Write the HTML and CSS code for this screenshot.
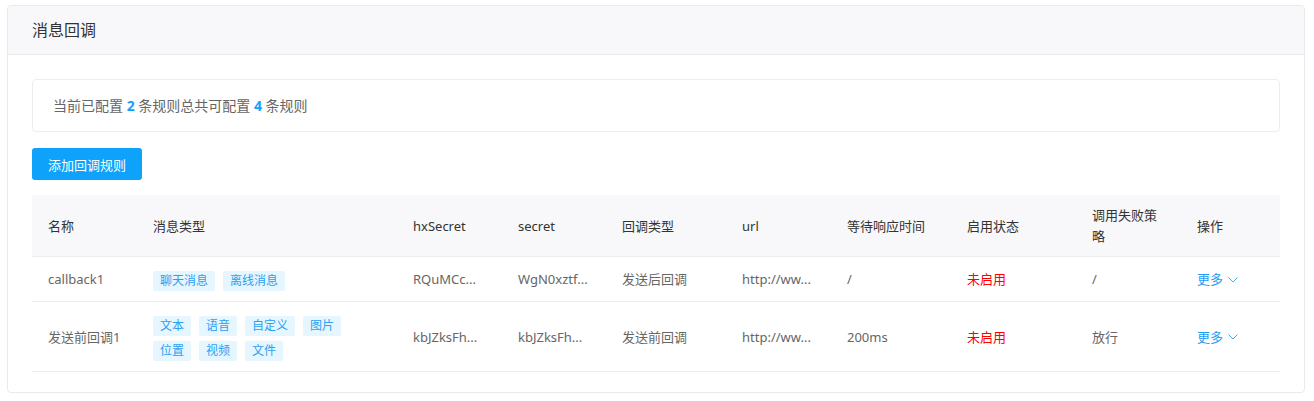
FILE: index.html
```html
<!DOCTYPE html>
<html lang="zh">
<head>
<meta charset="utf-8">
<link rel="stylesheet" href="styles.css">
</head>
<body>
<div class="page">
  <div class="card">
    <div class="card-header">消息回调</div>
    <div class="card-body">
      <div class="info">当前已配置 <b class="num">2</b> 条规则总共可配置 <b class="num">4</b> 条规则</div>
      <button class="btn-primary">添加回调规则</button>
      <table class="tbl">
        <colgroup>
          <col class="c1"><col class="c2"><col class="c3"><col class="c4"><col class="c5">
          <col class="c6"><col class="c7"><col class="c8"><col class="c9"><col class="c10">
        </colgroup>
        <thead>
          <tr>
            <th>名称</th><th>消息类型</th><th>hxSecret</th><th>secret</th><th>回调类型</th>
            <th>url</th><th>等待响应时间</th><th>启用状态</th><th>调用失败策略</th><th>操作</th>
          </tr>
        </thead>
        <tbody>
          <tr>
            <td>callback1</td>
            <td><div class="tags"><span class="tag">聊天消息</span><span class="tag">离线消息</span></div></td>
            <td>RQuMCc...</td>
            <td>WgN0xztf...</td>
            <td>发送后回调</td>
            <td>http://ww...</td>
            <td>/</td>
            <td class="off">未启用</td>
            <td>/</td>
            <td><span class="more">更多<svg class="chev" width="10" height="6" viewBox="0 0 10 6"><polyline points="0.5,0.5 5,5 9.5,0.5" fill="none" stroke="#4aaef5" stroke-width="1"/></svg></span></td>
          </tr>
          <tr>
            <td>发送前回调1</td>
            <td><div class="tags"><span class="tag">文本</span><span class="tag">语音</span><span class="tag">自定义</span><span class="tag">图片</span><span class="tag">位置</span><span class="tag">视频</span><span class="tag">文件</span></div></td>
            <td>kbJZksFh...</td>
            <td>kbJZksFh...</td>
            <td>发送前回调</td>
            <td>http://ww...</td>
            <td>200ms</td>
            <td class="off">未启用</td>
            <td>放行</td>
            <td><span class="more">更多<svg class="chev" width="10" height="6" viewBox="0 0 10 6"><polyline points="0.5,0.5 5,5 9.5,0.5" fill="none" stroke="#4aaef5" stroke-width="1"/></svg></span></td>
          </tr>
        </tbody>
      </table>
    </div>
  </div>
</div>
</body>
</html>
```
FILE: styles.css
```css
* { box-sizing: border-box; }
html, body { margin: 0; padding: 0; background: #fff; }
body {
  font-family: "Noto Sans", "Noto Sans CJK SC", sans-serif;
  font-size: 13px;
  color: #666;
}
.page { padding: 5px 9px 0 7px; }
.card {
  border: 1px solid #e9eaee;
  border-radius: 4px;
  background: #fff;
  overflow: hidden;
}
.card-header {
  height: 49px;
  line-height: 49px;
  padding: 0 24px;
  background: #f8f8fa;
  border-bottom: 1px solid #e9eaee;
  font-size: 16px;
  color: #333;
}
.card-body { padding: 24px 24px 20px; }
.info {
  border: 1px solid #ebedf0;
  border-radius: 4px;
  padding: 15px 20px;
  font-size: 14px;
  line-height: 21px;
  color: #666;
}
.num { color: #13a0fa; font-weight: 700; }
.btn-primary {
  display: block;
  margin-top: 16px;
  height: 32px;
  padding: 0 16px;
  border: none;
  border-radius: 3px;
  background: #0ea2fb;
  color: #fff;
  font-family: inherit;
  font-size: 13px;
}
.tbl {
  margin-top: 15px;
  width: 1248px;
  table-layout: fixed;
  border-collapse: collapse;
}
.c1 { width: 105px; } .c2 { width: 260px; } .c3 { width: 105px; } .c4 { width: 104px; }
.c5 { width: 120px; } .c6 { width: 105px; } .c7 { width: 120px; } .c8 { width: 125px; }
.c9 { width: 105px; } .c10 { width: 99px; }
.tbl th {
  background: #f8f8fa;
  color: #333;
  font-weight: 400;
  text-align: left;
  padding: 10px 16px 9px;
  line-height: 21px;
  border-bottom: 1px solid #ececef;
}
.tbl td {
  padding: 10px 16px;
  line-height: 20px;
  vertical-align: middle;
  border-bottom: 1px solid #ececef;
  white-space: nowrap;
}
.tags {
  display: flex;
  flex-wrap: wrap;
  column-gap: 8px;
  row-gap: 5px;
  padding-top: 4px;
  white-space: normal;
}
.tag {
  display: inline-block;
  height: 20px;
  line-height: 20px;
  padding: 0 7px;
  border-radius: 2px;
  background: #e6f6ff;
  color: #2b9ff2;
  font-size: 12px;
}
.tbl td.off { color: #ff0000; }
.more { color: #1f9cf2; display: inline-flex; align-items: center; }
.chev { margin-left: 5px; margin-top: 1px; }
```
